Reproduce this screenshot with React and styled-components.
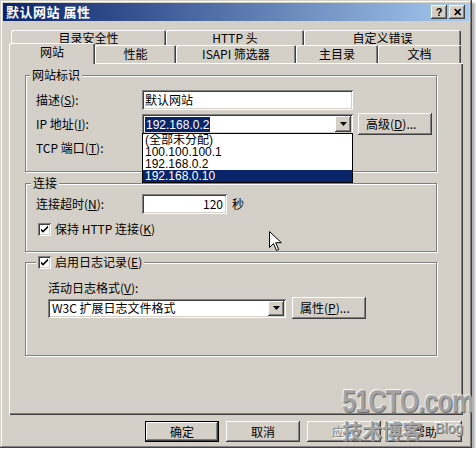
import React from 'react'
import styled, { createGlobalStyle, css } from 'styled-components'

const FACE = '#d4d0c8'

const GlobalStyle = createGlobalStyle`
  body {
    margin: 0;
    background: #fff;
  }
  * {
    box-sizing: border-box;
  }
`

const raised = css`
  background: ${FACE};
  box-shadow: inset -1px -1px #404040, inset 1px 1px #fff, inset -2px -2px #808080, inset 2px 2px ${FACE};
`

const sunken = css`
  background: #fff;
  box-shadow: inset 1px 1px #808080, inset -1px -1px #fff, inset 2px 2px #404040, inset -2px -2px ${FACE};
`

const Dialog = styled.div`
  position: relative;
  width: 472px;
  height: 448px;
  padding: 3px;
  display: flex;
  flex-direction: column;
  background: ${FACE};
  box-shadow: inset -1px -1px #404040, inset 1px 1px ${FACE}, inset -2px -2px #808080, inset 2px 2px #fff,
    3px 3px 2px rgba(0, 0, 0, 0.3);
  font-family: "Noto Sans CJK SC", "Liberation Sans", sans-serif;
  font-size: 12px;
  color: #000;
  overflow: hidden;
`

const TitleBar = styled.div`
  height: 18px;
  display: flex;
  align-items: flex-start;
  padding: 0 4px 0 3px;
  background: linear-gradient(to right, #0a246a, #a6caf0);
  color: #fff;
`

const TitleText = styled.div`
  flex: 1;
  font-size: 13px;
  font-weight: bold;
  line-height: 18px;
  letter-spacing: 0.5px;
`

const CaptionButton = styled.div`
  ${raised};
  width: 16px;
  height: 14px;
  margin: 2px 0 0 2px;
  display: flex;
  align-items: center;
  justify-content: center;
  color: #000;
  font-family: "Liberation Sans", sans-serif;
  font-weight: bold;
  font-size: 11px;
  line-height: 1;
`

const Body = styled.div`
  flex: 1;
  display: flex;
  flex-direction: column;
  padding: 9px 6px 0 6px;
`

const BackRow = styled.div`
  display: flex;
  height: 15px;
  margin-left: 2px;
`

const FrontRow = styled.div`
  display: flex;
  align-items: flex-end;
  height: 20px;
  margin: -2px 0 0 2px;
  position: relative;
  z-index: 2;
`

const Tab = styled.div`
  width: ${p => p.$w}px;
  height: ${p => (p.$back ? 15 : p.$active ? 21 : 18)}px;
  margin: ${p => (p.$active ? '0 0 -1px -2px' : '0')};
  padding-bottom: ${p => (p.$active ? 3 : 0)}px;
  padding-top: ${p => (p.$back ? 1 : 0)}px;
  display: flex;
  align-items: center;
  justify-content: center;
  background: ${FACE};
  border-radius: 2px 2px 0 0;
  box-shadow: inset 1px 1px #fff, inset -1px 0 #404040, inset -2px 0 #808080;
  line-height: 14px;
  position: relative;
  z-index: ${p => (p.$active ? 3 : 1)};
`

const Panel = styled.div`
  height: 352px;
  display: flex;
  flex-direction: column;
  padding: 12px 26px 0 16px;
  background: ${FACE};
  box-shadow: inset 1px 1px #fff, inset -1px -1px #404040, inset -2px -2px #808080;
`

const Group = styled.div`
  display: flex;
  flex-direction: column;
  margin-top: ${p => p.$mt || 0}px;
  padding: 0 10px ${p => p.$pb}px ${p => p.$pl || 10}px;
  border: 1px solid #808080;
  box-shadow: 1px 1px 0 #fff, inset 1px 1px 0 #fff;
`

const GroupTitle = styled.div`
  align-self: flex-start;
  height: 14px;
  margin: -8px 0 0 ${p => p.$ml}px;
  padding: 0 2px;
  display: flex;
  align-items: center;
  gap: 4px;
  background: ${FACE};
  line-height: 14px;
`

const Rows = styled.div`
  display: flex;
  flex-direction: column;
  gap: ${p => p.$gap}px;
  margin-top: ${p => p.$mt}px;
`

const Row = styled.div`
  display: flex;
  align-items: center;
  height: ${p => p.$h || 20}px;
  padding-left: ${p => p.$pl || 0}px;
`

const Label = styled.div`
  width: ${p => (p.$w ? `${p.$w}px` : 'auto')};
  margin-left: ${p => p.$ml || 0}px;
  flex-shrink: 0;
  line-height: 14px;
  white-space: nowrap;
`

const Field = styled.div`
  ${sunken};
  position: relative;
  width: ${p => p.$w}px;
  height: 20px;
  padding: 2px 4px 2px 3px;
  display: flex;
  align-items: center;
  justify-content: ${p => (p.$right ? 'flex-end' : 'flex-start')};
  line-height: 14px;
  flex-shrink: 0;
`

const Combo = styled(Field)`
  padding: 2px;
  height: ${p => p.$h || 20}px;
`

const ComboText = styled.div`
  flex: 1;
  display: flex;
  align-items: center;
  padding-left: 2px;
  font-family: ${p => (p.$num ? '"Liberation Sans", "Noto Sans CJK SC", sans-serif' : 'inherit')};
`

const Selected = styled.span`
  background: #0a246a;
  color: #fff;
  padding: 1px 1px 0 1px;
  margin-left: -1px;
  line-height: 14px;
`

const DropButton = styled.div`
  ${raised};
  width: 16px;
  height: 100%;
  display: flex;
  align-items: center;
  justify-content: center;
`

const DropList = styled.div`
  position: absolute;
  left: 0;
  top: calc(100% - 1px);
  width: 100%;
  border: 1px solid #000;
  background: #fff;
  z-index: 5;
  font-family: "Liberation Sans", "Noto Sans CJK SC", sans-serif;
`

const ListItem = styled.div`
  height: 12px;
  line-height: 12px;
  padding-left: 2px;
  white-space: nowrap;
  background: ${p => (p.$sel ? '#0a246a' : 'transparent')};
  color: ${p => (p.$sel ? '#fff' : '#000')};
`

const Button = styled.div`
  ${raised};
  width: 74px;
  height: ${p => p.$h || 22}px;
  margin-left: ${p => p.$ml || 0}px;
  flex-shrink: 0;
  display: flex;
  align-items: center;
  justify-content: ${p => (p.$left ? 'flex-start' : 'center')};
  padding-left: ${p => (p.$left ? 8 : 0)}px;
  line-height: 14px;
  color: ${p => (p.$disabled ? '#808080' : '#000')};
  text-shadow: ${p => (p.$disabled ? '1px 1px 0 #fff' : 'none')};
  ${p =>
    p.$default &&
    css`
      box-shadow: inset 0 0 0 1px #000, inset -2px -2px #404040, inset 2px 2px #fff, inset -3px -3px #808080;
    `}
`

const Check = styled.div`
  ${sunken};
  width: 13px;
  height: 13px;
  flex-shrink: 0;
  display: flex;
  align-items: center;
  justify-content: center;
`

const Suffix = styled.div`
  margin-left: 5px;
  line-height: 14px;
`

const ButtonBar = styled.div`
  display: flex;
  justify-content: flex-end;
  gap: 7px;
  margin-top: 6px;
  padding-right: 1px;
`

const Watermark = styled.div`
  position: absolute;
  left: 342px;
  top: 384px;
  display: flex;
  flex-direction: column;
  pointer-events: none;
  color: rgba(168, 168, 168, 0.92);
  text-shadow: 1px 1px 0 #6e6e6e, -1px -1px 0 #f4f4f4;
`

const WatermarkBig = styled.div`
  font-family: "Liberation Sans", sans-serif;
  font-weight: bold;
  font-size: 32px;
  line-height: 34px;
  letter-spacing: -1px;
  transform: scaleX(0.78);
  transform-origin: left center;
  white-space: nowrap;
`

const WatermarkSmall = styled.div`
  display: flex;
  align-items: flex-start;
  margin-top: 3px;
  gap: 13px;
  white-space: nowrap;
`

const WatermarkCn = styled.span`
  font-size: 20px;
  font-weight: bold;
  line-height: 20px;
`

const WatermarkBlog = styled.span`
  font-family: "Liberation Sans", sans-serif;
  font-size: 14px;
  line-height: 14px;
`

const Cursor = styled.svg`
  position: absolute;
  left: 269px;
  top: 231px;
  z-index: 10;
`

const Arrow = () => (
  <svg width="7" height="4" viewBox="0 0 7 4">
    <path d="M0 0h7L3.5 4z" fill="#000" />
  </svg>
)

const Tick = () => (
  <svg width="9" height="9" viewBox="0 0 9 9">
    <path d="M1 3.5l2 2L8 .5v2.2L3 7.7 1 5.7z" fill="#000" />
  </svg>
)

const K = ({ k }) => (
  <>
    (<u>{k}</u>)
  </>
)

const App = () => {
  return (
    <>
      <GlobalStyle />
      <Dialog>
        <TitleBar>
          <TitleText>默认网站 属性</TitleText>
          <CaptionButton>?</CaptionButton>
          <CaptionButton>✕</CaptionButton>
        </TitleBar>
        <Body>
          <BackRow>
            <Tab $back $w={155}>目录安全性</Tab>
            <Tab $back $w={138}>HTTP 头</Tab>
            <Tab $back $w={157}>自定义错误</Tab>
          </BackRow>
          <FrontRow>
            <Tab $active $w={86}>网站</Tab>
            <Tab $w={81}>性能</Tab>
            <Tab $w={120}>ISAPI 筛选器</Tab>
            <Tab $w={82}>主目录</Tab>
            <Tab $w={83}>文档</Tab>
          </FrontRow>
          <Panel>
            <Group $pb={13}>
              <GroupTitle $ml={-6}>网站标识</GroupTitle>
              <Rows $gap={4} $mt={8}>
                <Row>
                  <Label $w={106}>描述<K k="S" />:</Label>
                  <Field $w={211}>默认网站</Field>
                </Row>
                <Row>
                  <Label $w={106}>IP 地址<K k="I" />:</Label>
                  <Combo $w={211}>
                    <ComboText $num>
                      <Selected>192.168.0.2</Selected>
                    </ComboText>
                    <DropButton><Arrow /></DropButton>
                    <DropList>
                      <ListItem>(全部未分配)</ListItem>
                      <ListItem>100.100.100.1</ListItem>
                      <ListItem>192.168.0.2</ListItem>
                      <ListItem $sel>192.168.0.10</ListItem>
                    </DropList>
                  </Combo>
                  <Button $ml={5} $left>高级<K k="D" />...</Button>
                </Row>
                <Row>
                  <Label $w={106}>TCP 端口<K k="T" />:</Label>
                  <Field $w={56} />
                </Row>
              </Rows>
            </Group>

            <Group $mt={11} $pb={12}>
              <GroupTitle $ml={-5}>连接</GroupTitle>
              <Rows $gap={5} $mt={4}>
                <Row>
                  <Label $w={106}>连接超时<K k="N" />:</Label>
                  <Field $w={85} $right>120</Field>
                  <Suffix>秒</Suffix>
                </Row>
                <Row $pl={2}>
                  <Check><Tick /></Check>
                  <Label $ml={4}>保持 HTTP 连接<K k="K" /></Label>
                </Row>
              </Rows>
            </Group>

            <Group $mt={10} $pb={36} $pl={22}>
              <GroupTitle $ml={-12}>
                <Check><Tick /></Check>
                <Label>启用日志记录<K k="E" /></Label>
              </GroupTitle>
              <Rows $gap={2} $mt={12}>
                <Label>活动日志格式<K k="V" />:</Label>
                <Row $h={22}>
                  <Combo $w={238} $h={19}>
                    <ComboText>W3C 扩展日志文件格式</ComboText>
                    <DropButton><Arrow /></DropButton>
                  </Combo>
                  <Button $ml={6} $left>属性<K k="P" />...</Button>
                </Row>
              </Rows>
            </Group>
          </Panel>
          <ButtonBar>
            <Button $h={21} $default>确定</Button>
            <Button $h={21}>取消</Button>
            <Button $h={21} $disabled>应用</Button>
            <Button $h={21}>帮助</Button>
          </ButtonBar>
        </Body>

        <Cursor width="13" height="21" viewBox="0 0 13 21">
          <path d="M.5.5v16l4-4 3 7 2.2-1-3-6.8h5.6z" fill="#fff" stroke="#000" strokeWidth="1" />
        </Cursor>

        <Watermark>
          <WatermarkBig>51CTO.com</WatermarkBig>
          <WatermarkSmall>
            <WatermarkCn>技术博客</WatermarkCn>
            <WatermarkBlog>Blog</WatermarkBlog>
          </WatermarkSmall>
        </Watermark>
      </Dialog>
    </>
  )
}

export default App
